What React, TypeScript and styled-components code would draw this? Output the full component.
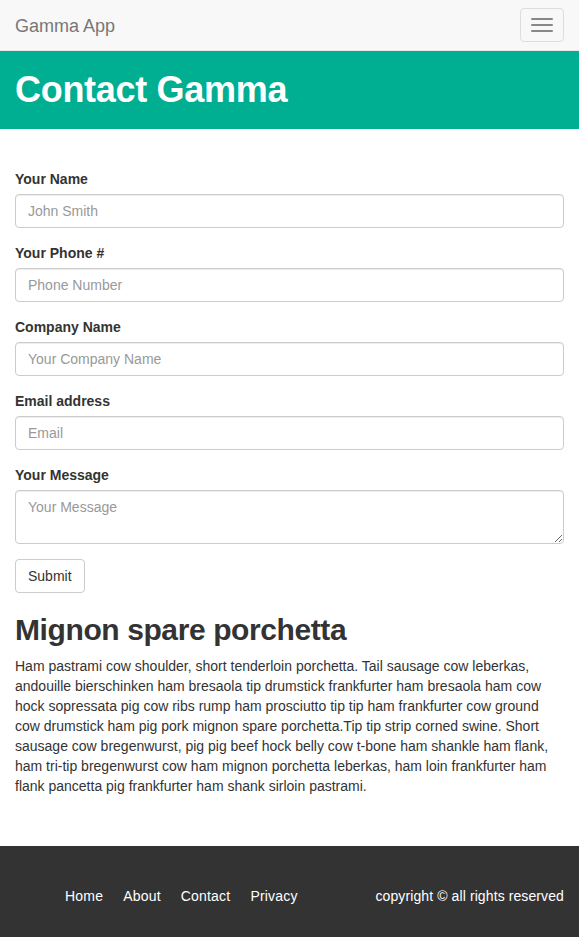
import React from "react";
import styled, { createGlobalStyle } from "styled-components";

const Global = createGlobalStyle`
  * { box-sizing: border-box; }
  html, body { margin: 0; padding: 0; }
  body {
    font-family: "Liberation Sans", Arial, Helvetica, sans-serif;
    font-size: 14px;
    line-height: 20px;
    color: #333;
    background: #fff;
  }
`;

const Navbar = styled.nav`
  display: flex;
  align-items: center;
  justify-content: space-between;
  height: 51px;
  padding: 0 15px;
  background: #f8f8f8;
  border-bottom: 1px solid #e7e7e7;
`;

const Brand = styled.a`
  font-size: 18px;
  line-height: 20px;
  color: #777;
  text-decoration: none;
  margin-top: 1px;
`;

const Toggle = styled.button`
  display: flex;
  flex-direction: column;
  gap: 4px;
  width: 44px;
  height: 34px;
  padding: 9px 10px;
  background: transparent;
  border: 1px solid #ddd;
  border-radius: 4px;
  margin-top: -1px;
`;

const Bar = styled.span`
  display: block;
  width: 22px;
  height: 2px;
  border-radius: 1px;
  background: #888;
`;

const Hero = styled.header`
  background: #00af91;
  padding: 19px 15px;
`;

const HeroTitle = styled.h1`
  margin: 0;
  font-size: 36px;
  line-height: 40px;
  font-weight: 700;
  letter-spacing: -0.3px;
  color: #fff;
`;

const Main = styled.main`
  padding: 40px 15px 40px;
`;

const FormGroup = styled.div`
  margin-bottom: 15px;
`;

const Label = styled.label`
  display: block;
  margin-bottom: 5px;
  font-weight: 700;
  line-height: 20px;
`;

const fieldCss = `
  display: block;
  width: 100%;
  padding: 6px 12px;
  font-family: "Liberation Sans", Arial, Helvetica, sans-serif;
  font-size: 14px;
  line-height: 20px;
  color: #555;
  background: #fff;
  border: 1px solid #ccc;
  border-radius: 4px;
  box-shadow: inset 0 1px 1px rgba(0,0,0,0.075);
  &::placeholder { color: #999; }
`;

const Input = styled.input`
  ${fieldCss}
  height: 34px;
`;

const TextArea = styled.textarea`
  ${fieldCss}
  height: 54px;
  margin: 0;
`;

const Button = styled.button`
  display: inline-block;
  height: 34px;
  padding: 6px 12px;
  font-family: "Liberation Sans", Arial, Helvetica, sans-serif;
  font-size: 14px;
  line-height: 20px;
  color: #333;
  background: #fff;
  border: 1px solid #ccc;
  border-radius: 4px;
`;

const SubTitle = styled.h2`
  margin: 20px 0 10px;
  font-size: 30px;
  line-height: 33px;
  font-weight: 700;
  letter-spacing: -0.4px;
  color: #333;
`;

const Para = styled.p`
  margin: 0 0 10px;
`;

const Footer = styled.footer`
  display: flex;
  align-items: center;
  justify-content: space-between;
  background: #333;
  padding: 30px 15px 30px 55px;
`;

const FooterNav = styled.ul`
  display: flex;
  list-style: none;
  margin: 0;
  padding: 0;
`;

const FooterLink = styled.a`
  display: block;
  padding: 10px;
  color: #fff;
  text-decoration: none;
  line-height: 20px;
  letter-spacing: 0.2px;
`;

const Copyright = styled.span`
  color: #fff;
  line-height: 20px;
  letter-spacing: 0.1px;
`;

const fields = [
  { label: "Your Name", placeholder: "John Smith" },
  { label: "Your Phone #", placeholder: "Phone Number" },
  { label: "Company Name", placeholder: "Your Company Name" },
  { label: "Email address", placeholder: "Email" },
];

export default function App() {
  return (
    <>
      <Global />
      <Navbar>
        <Brand href="#">Gamma App</Brand>
        <Toggle aria-label="Toggle navigation">
          <Bar />
          <Bar />
          <Bar />
        </Toggle>
      </Navbar>
      <Hero>
        <HeroTitle>Contact Gamma</HeroTitle>
      </Hero>
      <Main>
        <form onSubmit={(e) => e.preventDefault()}>
          {fields.map((f) => (
            <FormGroup key={f.label}>
              <Label>{f.label}</Label>
              <Input placeholder={f.placeholder} />
            </FormGroup>
          ))}
          <FormGroup>
            <Label>Your Message</Label>
            <TextArea placeholder="Your Message" />
          </FormGroup>
          <Button type="submit">Submit</Button>
        </form>
        <SubTitle>Mignon spare porchetta</SubTitle>
        <Para>
          Ham pastrami cow shoulder, short tenderloin porchetta. Tail sausage cow leberkas,
          andouille bierschinken ham bresaola tip drumstick frankfurter ham bresaola ham cow
          hock sopressata pig cow ribs rump ham prosciutto tip tip ham frankfurter cow ground
          cow drumstick ham pig pork mignon spare porchetta.Tip tip strip corned swine. Short
          sausage cow bregenwurst, pig pig beef hock belly cow t-bone ham shankle ham flank,
          ham tri-tip bregenwurst cow ham mignon porchetta leberkas, ham loin frankfurter ham
          flank pancetta pig frankfurter ham shank sirloin pastrami.
        </Para>
      </Main>
      <Footer>
        <FooterNav>
          {["Home", "About", "Contact", "Privacy"].map((l) => (
            <li key={l}>
              <FooterLink href="#">{l}</FooterLink>
            </li>
          ))}
        </FooterNav>
        <Copyright>copyright © all rights reserved</Copyright>
      </Footer>
    </>
  );
}
